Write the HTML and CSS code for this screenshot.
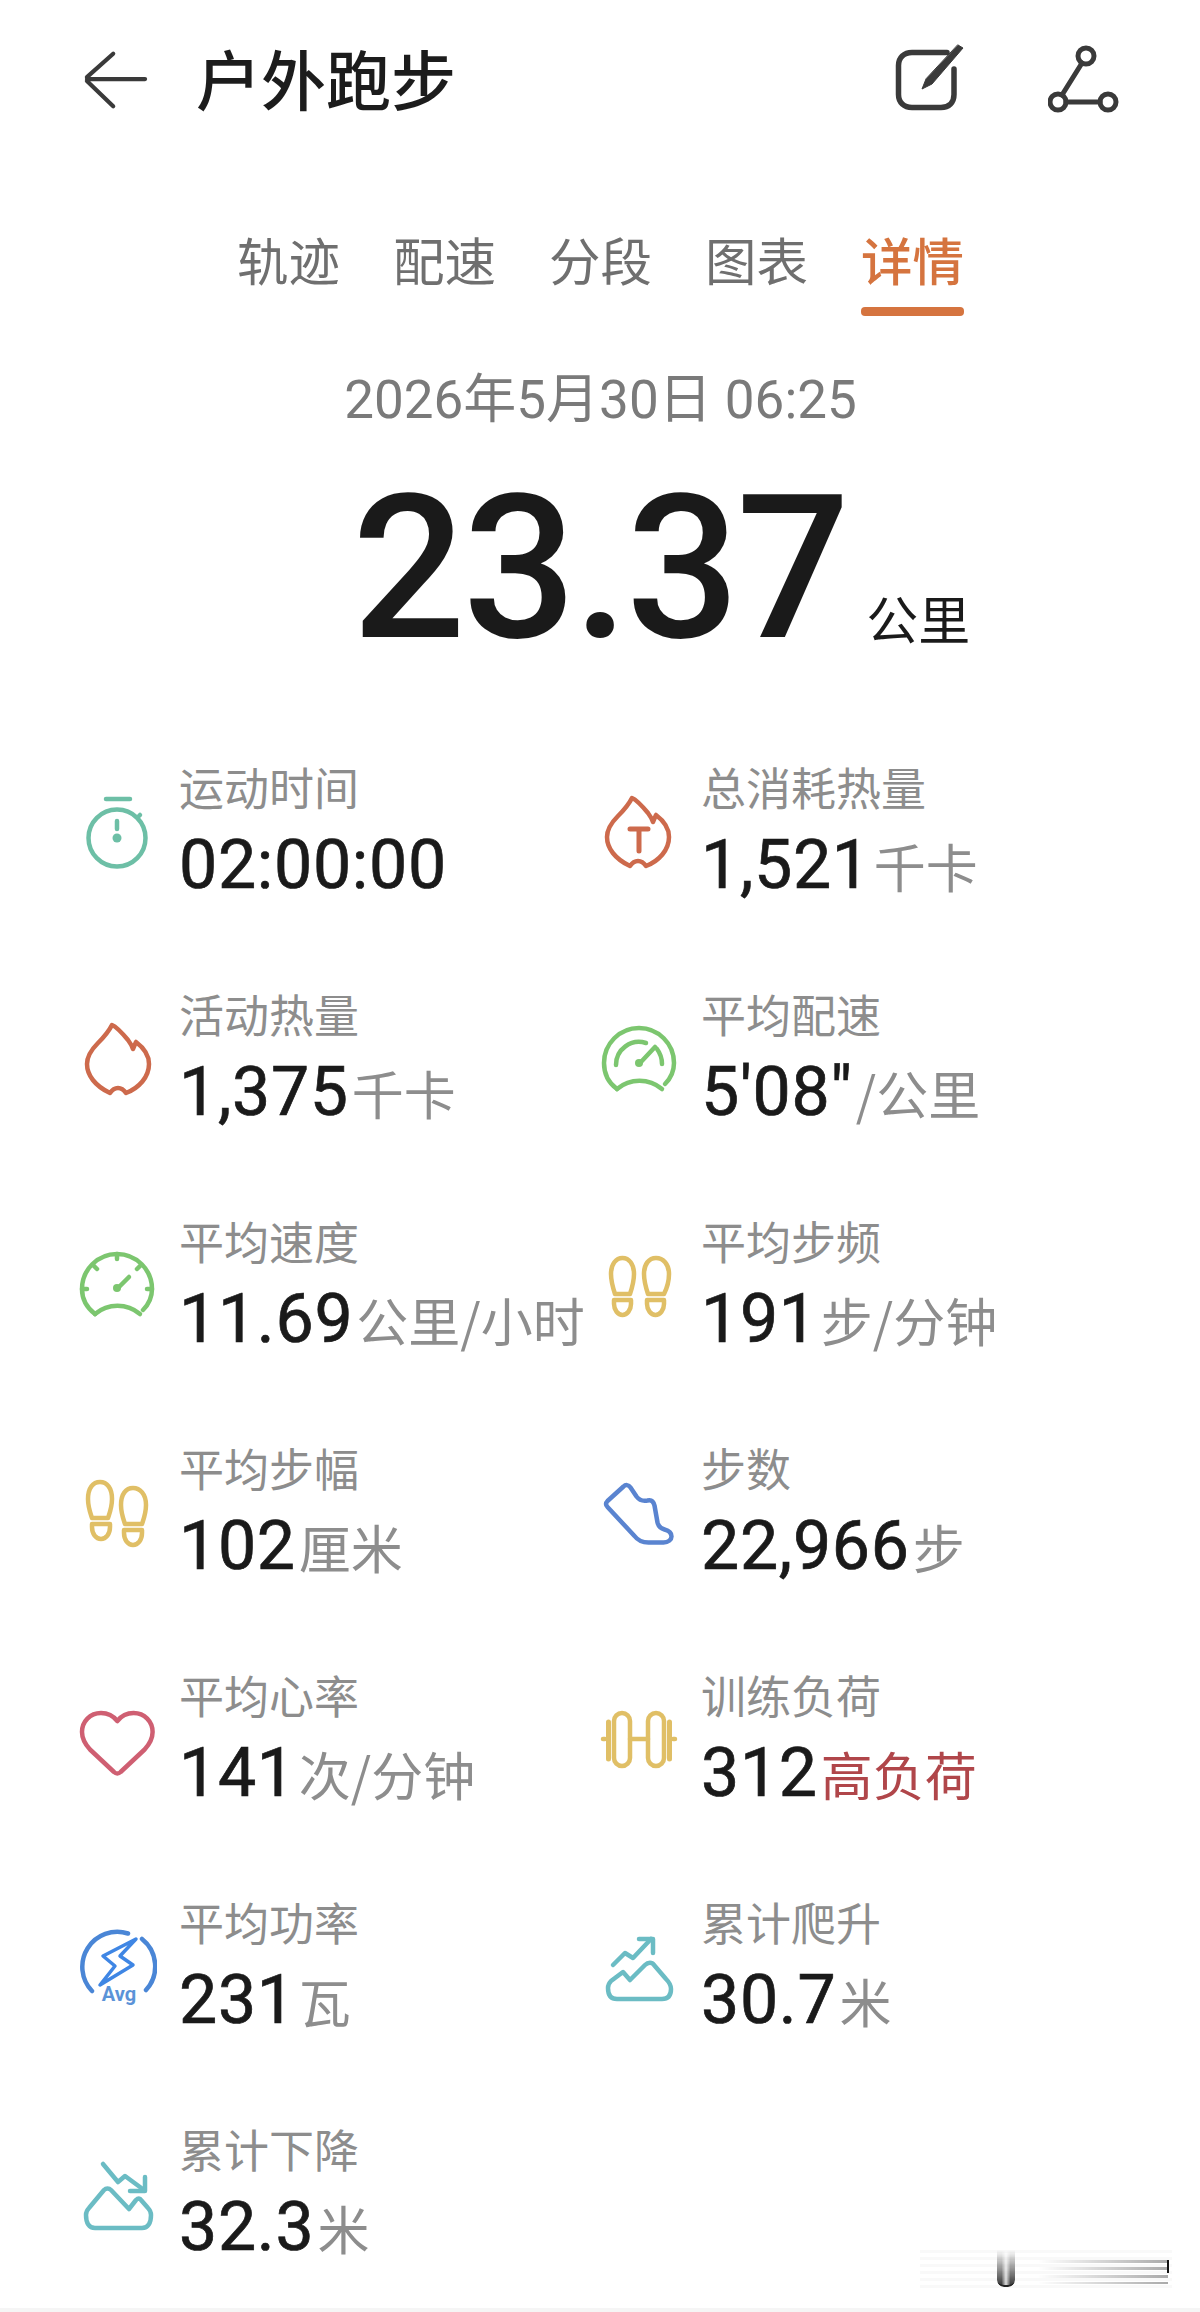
FILE: index.html
```html
<!DOCTYPE html>
<html lang="zh-CN">
<head>
<meta charset="utf-8">
<title>户外跑步</title>
<link rel="stylesheet" href="styles.css">
</head>
<body>
<main class="page">
  <header class="topbar">
    <svg class="back" viewBox="0 0 70 64"><path d="M32 4 4 29M32 60 4 33M4 31h62"/></svg>
    <h1 class="title">户外跑步</h1>
    <svg class="edit" viewBox="0 0 84 72"><path d="M53 8.500H18c-8 0-13.500 5-13.500 13v29c0 8 5.500 13 13.500 13h29c8 0 13-5 13-13V25"/><path class="pen" d="M64 1 69 4 38 40 28 45 32 35z"/></svg>
    <svg class="share" viewBox="0 0 72 72"><circle cx="38" cy="11" r="8"/><circle cx="10" cy="57" r="8"/><circle cx="60" cy="57" r="8"/><path d="M34 18 14 50M18 57h34"/></svg>
  </header>

  <nav class="tabs">
    <span class="tab">轨迹</span>
    <span class="tab">配速</span>
    <span class="tab">分段</span>
    <span class="tab">图表</span>
    <span class="tab active">详情</span>
  </nav>

  <p class="date">2026年5月30日 06:25</p>
  <div class="distance"><span class="distance-num">23.37</span><span class="distance-unit">公里</span></div>

  <section class="stats">
    <div class="stat">
      <svg class="ico teal" viewBox="0 0 80 80"><circle cx="40" cy="47" r="28.5"/><path d="M29 8h24M62 25l1-1M40 30v8"/><circle class="fill" cx="40" cy="47" r="4.5"/></svg>
      <div class="txt"><div class="lab">运动时间</div><div class="val"><b>02:00:00</b></div></div>
    </div>
    <div class="stat">
      <svg class="ico red" viewBox="0 0 80 80"><path d="M33 7c-2 4-8 12-14 18-7 7-11 13-11 21 0 11 8 22 23 29 2-3 5-5 8-5s6 2 8 5c13-5 23-16 23-29 0-9-5-16-13-22-1 2-2 5-3 7-1-3-2-5-5-9-5-6-11-13-16-15Z"/><path class="t" d="M31 38h18M40 38v22"/></svg>
      <div class="txt"><div class="lab">总消耗热量</div><div class="val"><b>1,521</b><i>千卡</i></div></div>
    </div>

    <div class="stat">
      <svg class="ico red" viewBox="0 0 80 80"><path d="M35 7c-2 4-8 12-14 18-7 7-11 13-11 21 0 11 8 22 23 29 2-3 5-5 8-5s6 2 8 5c13-5 23-16 23-29 0-9-5-16-13-22-1 2-2 5-3 7-1-3-2-5-5-9-5-6-11-13-16-15Z"/></svg>
      <div class="txt"><div class="lab">活动热量</div><div class="val"><b>1,375</b><i>千卡</i></div></div>
    </div>
    <div class="stat">
      <svg class="ico green" viewBox="0 0 80 80"><path d="M18 71C7 63 5 53 5 45a35 35 0 0 1 70 0c0 8-3 15-9 21"/><path d="M18 71c13-11 32-11 45 0"/><path d="M17 47a23 23 0 0 1 30-22M58 31c3 4 5 9 5 15"/><path d="M41 45 56 29"/><circle class="fill" cx="40" cy="45" r="4"/></svg>
      <div class="txt"><div class="lab">平均配速</div><div class="val"><b>5'08"</b><i>/公里</i></div></div>
    </div>

    <div class="stat">
      <svg class="ico green" viewBox="0 0 80 80"><path d="M18 69C9 62 5 53 5 44a35 35 0 0 1 70 0c0 8-3 15-9 21"/><path d="M18 69c13-11 32-11 45 0"/><path d="M40 9v5M16 20l4 4M64 20l-4 4M5 44h5M75 44h-5"/><path d="M41 43 52 32"/><circle class="fill" cx="40" cy="43" r="4"/></svg>
      <div class="txt"><div class="lab">平均速度</div><div class="val"><b>11.69</b><i>公里/小时</i></div></div>
    </div>
    <div class="stat">
      <svg class="ico gold" viewBox="0 0 80 80"><path d="M16 49c-2-6-4-12-4-20 0-10 5-16 11.500-16S35 19 35 29c0 8-2 14-4 20z"/><path d="M15 55h17v4c0 6-4 11-8.500 11S15 65 15 59z"/><path d="M49 49c-2-6-4-12-4-20 0-10 5-16 12-16s13 6 13 16c0 8-2 14-5 20z"/><path d="M48 55h17v4c0 6-4 11-8.500 11S48 65 48 59z"/></svg>
      <div class="txt"><div class="lab">平均步频</div><div class="val"><b>191</b><i>步/分钟</i></div></div>
    </div>

    <div class="stat">
      <svg class="ico gold" viewBox="0 0 80 80"><path d="M15 46c-2-6-4-11-4-19 0-11 5-17 12-17s12 6 12 17c0 8-2 13-4 19z"/><path d="M15 52h18v3c0 7-4 12-9 12s-9-5-9-12z"/><path d="M48 52c-2-6-4-11-4-19 0-11 5-17 12-17s13 6 13 17c0 8-2 13-4 19z"/><path d="M47 58h18v3c0 7-4 12-9 12s-9-5-9-12z"/></svg>
      <div class="txt"><div class="lab">平均步幅</div><div class="val"><b>102</b><i>厘米</i></div></div>
    </div>
    <div class="stat">
      <svg class="ico blue" viewBox="0 0 80 80"><path d="M24.500 14.500 8.500 29c-2 2-2 4 0 6l27 29c3 4 8 6.500 14 6.500h15c5 0 8-3 8-6 0-4-3-6-7-7-4-1-6-3-7-7l-3-17c-1-4-3-6-7-5-5 1-8 0-11-4l-6-9c-2-3-5-3-7-1Z"/></svg>
      <div class="txt"><div class="lab">步数</div><div class="val"><b>22,966</b><i>步</i></div></div>
    </div>

    <div class="stat">
      <svg class="ico pink" viewBox="0 0 80 80"><path d="M40.300 22C36 16.500 30 14 24 14 13 14 5 22.500 5 33c0 7 3 12 8 17.500l24 22.500c2 2 4.600 2 6.600 0l24-22.500c5-5.500 8-10.500 8-17.500 0-10.500-8-19-19-19-6 0-12 2.500-16.300 8Z"/></svg>
      <div class="txt"><div class="lab">平均心率</div><div class="val"><b>141</b><i>次/分钟</i></div></div>
    </div>
    <div class="stat">
      <svg class="ico gold" viewBox="0 0 80 80"><rect x="15" y="14" width="16" height="53" rx="8"/><rect x="49" y="14" width="16" height="53" rx="8"/><path d="M31 40h18"/><path class="thick" d="M9.500 23v37M70.500 23v37"/><path d="M4 40h2M74 40h2"/></svg>
      <div class="txt"><div class="lab">训练负荷</div><div class="val"><b>312</b><i class="high">高负荷</i></div></div>
    </div>

    <div class="stat">
      <svg class="ico azure" viewBox="0 0 80 80"><path d="M15 65A35 35 0 0 1 51 7.500M65 13a35 35 0 0 1 4 51"/><path class="bolt" d="M59 13 26 30l12 10-15 19 33-20-13-9z"/><text class="avg" x="42" y="75">Avg</text></svg>
      <div class="txt"><div class="lab">平均功率</div><div class="val"><b>231</b><i>瓦</i></div></div>
    </div>
    <div class="stat">
      <svg class="ico cyan" viewBox="0 0 80 80"><path d="M9 62c0-3 1-5 3-7l12-9 7 8 15-15c3-3 7-3 9 0l12 14c3 3 5 6 5 10 0 7-3 10-9 10H18c-6 0-9-4-9-11Z"/><path d="M14 39 26 27l8 5 18-19"/><path d="M40 13h14v14"/></svg>
      <div class="txt"><div class="lab">累计爬升</div><div class="val"><b>30.7</b><i>米</i></div></div>
    </div>

    <div class="stat">
      <svg class="ico cyan" viewBox="0 0 80 80"><path d="M9 62c0-3 1-5 3-7l15-18c2-2 5-2 7 0l18 19 7-9c2-2 4-2 5 0l7 8c2 2 3 4 3 7 0 8-3 13-9 13H18c-6 0-9-5-9-13Z"/><path d="M26 11 41 29l7-6 19 14"/><path d="M53 38h15V24"/></svg>
      <div class="txt"><div class="lab">累计下降</div><div class="val"><b>32.3</b><i>米</i></div></div>
    </div>
  </section>

  <div class="watermark" aria-hidden="true">
    <span class="wm-pill"></span>
    <span class="wm-lines"></span>
    <span class="wm-tick"></span>
  </div>
  <div class="bottom-strip"></div>
</main>
</body>
</html>
```

FILE: styles.css
```css
* { box-sizing: border-box; }
html, body { margin: 0; padding: 0; background: #fff; }
.page {
  position: relative;
  width: 1200px;
  height: 2312px;
  overflow: hidden;
  background: #fff;
  font-family: "Noto Sans CJK SC", "Roboto", sans-serif;
  color: #1a1a1a;
}
.topbar {
  display: flex;
  align-items: center;
  height: 100px;
  margin-top: 30px;
  padding-left: 83px;
}
.topbar svg { fill: none; stroke: #3a3a3a; stroke-linecap: round; stroke-linejoin: round; flex: none; }
.back { width: 66px; height: 60px; stroke-width: 4.5; }
.title { margin: 0 0 6px 47px; font-size: 65px; font-weight: 500; line-height: 94px; color: #1c1c1c; flex: 1; }
.edit { width: 84px; height: 72px; stroke-width: 5.5; margin-right: 70px; }
.edit .pen { fill: #3a3a3a; stroke-width: 1; }
.share { width: 72px; height: 72px; stroke-width: 5; margin-right: 80px; margin-top: 2px; }

.tabs {
  display: flex;
  justify-content: flex-start;
  gap: 53px;
  margin-top: 91px;
  padding-left: 237px;
  height: 85px;
}
.tab {
  position: relative;
  width: 103px;
  font-size: 51.5px;
  line-height: 76px;
  color: #6f6f6f;
  white-space: nowrap;
}
.tab.active { color: #d5743f; font-weight: 500; }
.tab.active::after {
  content: "";
  position: absolute;
  left: 0;
  right: 0;
  bottom: -10px;
  height: 9px;
  border-radius: 4px;
  background: #d5743f;
}
.date {
  margin: 59px 0 0;
  text-align: center;
  font-family: "Roboto", "Noto Sans CJK SC", sans-serif;
  font-size: 53px;
  line-height: 70px;
  color: #7a7a7a;
  padding-left: 1px;
}
.distance {
  display: flex;
  align-items: baseline;
  height: 220px;
  margin-top: 24px;
  padding-left: 352px;
}
.distance-num {
  font-family: "Roboto", sans-serif;
  font-size: 200px;
  font-weight: 500;
  line-height: 220px;
  letter-spacing: -3px;
  color: #1a1a1a;
}
.distance-unit { margin-left: 19px; font-size: 52px; color: #1a1a1a; font-weight: 400; transform: translateY(3px); }

.stats {
  display: grid;
  grid-template-columns: 522px 522px;
  grid-auto-rows: 227px;
  margin-top: 79px;
  padding-left: 77px;
}
.stat { display: flex; align-items: flex-start; }
.ico {
  flex: none;
  width: 80px;
  height: 80px;
  margin-top: 33px;
  fill: none;
  stroke-width: 4.5;
  stroke-linecap: round;
  stroke-linejoin: round;
}
.ico .fill { fill: currentColor; stroke: none; }
.teal { stroke: #6dbfa6; color: #6dbfa6; }
.red { stroke: #cd6a4c; color: #cd6a4c; }
.green { stroke: #7cc66f; color: #7cc66f; }
.gold { stroke: #e0bf66; color: #e0bf66; }
.blue { stroke: #5a84d0; color: #5a84d0; }
.pink { stroke: #cf5f72; color: #cf5f72; }
.azure { stroke: #4a86d6; color: #4a86d6; }
.cyan { stroke: #6bbcc4; color: #6bbcc4; }
.ico .t { stroke-width: 5; }
.ico .thick { stroke-width: 5; }
.ico .bolt { stroke: #3f86e4; stroke-width: 3.5; }
.ico .avg {
  fill: #5b93d8;
  stroke: none;
  font-family: "Roboto", sans-serif;
  font-size: 20px;
  font-weight: 700;
  text-anchor: middle;
}
.txt { margin-left: 22px; white-space: nowrap; }
.lab { font-size: 45px; line-height: 58px; color: #8d8d8d; }
.val { display: flex; align-items: baseline; margin-top: 7px; line-height: 84px; }
.val b { font-family: "Roboto", sans-serif; font-size: 68px; font-weight: 400; letter-spacing: 0.7px; -webkit-text-stroke: 0.7px #1a1a1a; color: #1a1a1a; }
.val i { margin-left: 3px; font-style: normal; font-size: 52px; color: #8d8d8d; }
.val i.high { color: #b0464a; }

.watermark {
  position: absolute;
  left: 920px;
  top: 2250px;
  width: 252px;
  height: 38px;
  background: repeating-linear-gradient(0deg, #f9f9f9 0 3px, #fff 3px 7px);
}
.wm-pill {
  position: absolute;
  left: 77px;
  top: 0;
  width: 18px;
  height: 37px;
  border-radius: 0 0 7px 7px;
  border-bottom: 2px solid #222;
  background: linear-gradient(90deg, #444 0 25%, #ddd 50%, #444 75%);
  -webkit-mask-image: linear-gradient(transparent, #000 90%);
  mask-image: linear-gradient(transparent, #000 90%);
}
.wm-lines {
  position: absolute;
  right: 4px;
  top: 10px;
  width: 130px;
  height: 24px;
  background: repeating-linear-gradient(180deg, #aaa 0 3px, transparent 3px 7.5px);
  -webkit-mask-image: linear-gradient(90deg, transparent, #000);
  mask-image: linear-gradient(90deg, transparent, #000);
}
.wm-tick {
  position: absolute;
  right: 3px;
  top: 10px;
  width: 2px;
  height: 13px;
  background: #111;
}
.bottom-strip { position: absolute; left: 0; right: 0; bottom: 0; height: 4px; background: #f5f5f5; }
```
